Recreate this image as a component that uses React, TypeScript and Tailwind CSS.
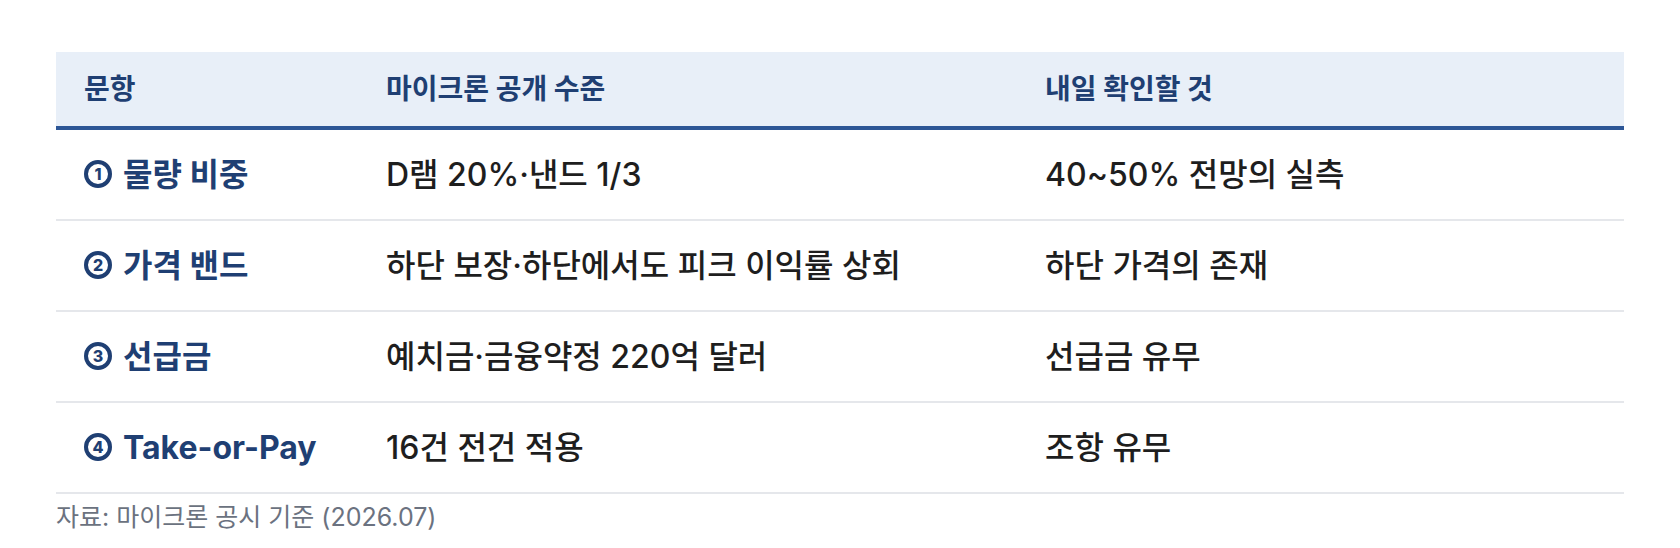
import React from "react";

const rows = [
  { n: "1", k: "물량 비중", a: "D램 20%·낸드 1/3", b: "40~50% 전망의 실측" },
  { n: "2", k: "가격 밴드", a: "하단 보장·하단에서도 피크 이익률 상회", b: "하단 가격의 존재" },
  { n: "3", k: "선급금", a: "예치금·금융약정 220억 달러", b: "선급금 유무" },
  { n: "4", k: "Take-or-Pay", a: "16건 전건 적용", b: "조항 유무" },
];

export default function App() {
  return (
    <div
      className="w-[1680px] h-[548px] bg-white px-[56px] pt-[52px]"
      style={{ fontFamily: 'Inter, "Noto Sans CJK KR", sans-serif' }}
    >
      <div className="grid grid-cols-[302px_659px_607px] h-[78px] bg-[#e8eff8] border-b-4 border-[#2c5696] items-center text-[28px] font-bold text-[#1f3f73]">
        <div className="pl-[28px]">문항</div>
        <div className="pl-[28px]">마이크론 공개 수준</div>
        <div className="pl-[28px]">내일 확인할 것</div>
      </div>
      {rows.map((r) => (
        <div
          key={r.k}
          className="grid grid-cols-[302px_659px_607px] h-[91px] border-b-2 border-[#e5e7eb] items-center text-[32px]"
        >
          <div className="pl-[28px] flex items-center font-bold text-[#1f3f73] whitespace-nowrap">
            <span className="shrink-0 flex items-center justify-center w-[28px] h-[28px] rounded-full border-[4px] border-[#1f3f73] text-[16px] leading-none font-extrabold mr-[11px] -mt-[2px]">
              {r.n}
            </span>
            <span>{r.k}</span>
          </div>
          <div className="pl-[28px] font-medium text-[#1e1e1e] whitespace-nowrap">{r.a}</div>
          <div className="pl-[28px] font-medium text-[#1e1e1e] whitespace-nowrap">{r.b}</div>
        </div>
      ))}
      <div className="pt-[5px] text-[25px] leading-[36px] text-[#6b7280]">
        자료: 마이크론 공시 기준 (2026.07)
      </div>
    </div>
  );
}
